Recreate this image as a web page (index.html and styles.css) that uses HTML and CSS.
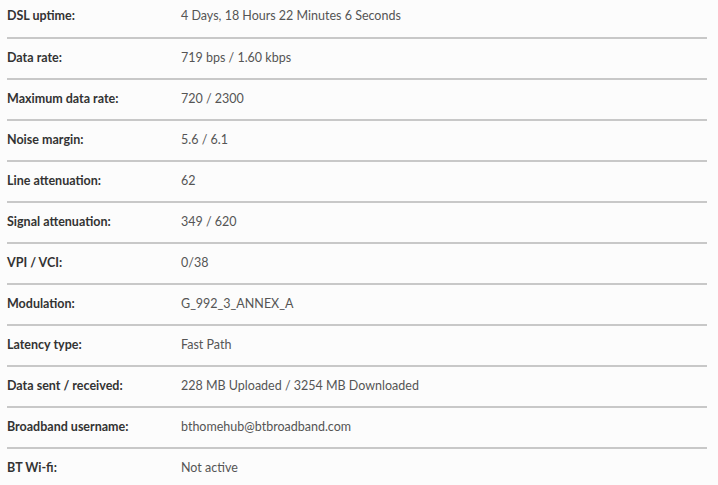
FILE: index.html
```html
<!DOCTYPE html>
<html lang="en">
<head>
    <meta charset="UTF-8">
    <meta name="viewport" content="width=device-width, initial-scale=1.0">
    <title>Broadband details</title>
    <link rel="stylesheet" href="styles.css">
</head>
<body>

<div class="details">
    <div class="row"><span class="label">DSL uptime:</span><span class="value">4 Days, 18 Hours 22 Minutes 6 Seconds</span></div>
    <div class="row"><span class="label">Data rate:</span><span class="value">719 bps / 1.60 kbps</span></div>
    <div class="row"><span class="label">Maximum data rate:</span><span class="value">720 / 2300</span></div>
    <div class="row"><span class="label">Noise margin:</span><span class="value">5.6 / 6.1</span></div>
    <div class="row"><span class="label">Line attenuation:</span><span class="value">62</span></div>
    <div class="row"><span class="label">Signal attenuation:</span><span class="value">349 / 620</span></div>
    <div class="row"><span class="label">VPI / VCI:</span><span class="value">0/38</span></div>
    <div class="row"><span class="label">Modulation:</span><span class="value">G_992_3_ANNEX_A</span></div>
    <div class="row"><span class="label">Latency type:</span><span class="value">Fast Path</span></div>
    <div class="row"><span class="label">Data sent / received:</span><span class="value">228 MB Uploaded / 3254 MB Downloaded</span></div>
    <div class="row"><span class="label">Broadband username:</span><span class="value">bthomehub@btbroadband.com</span></div>
    <div class="row"><span class="label">BT Wi-fi:</span><span class="value">Not active</span></div>
</div>

</body>
</html>
```

FILE: styles.css
```css
body {
    font-family: Lato, Arial, sans-serif;
    font-size: 12.5px;
    margin: 0;
    padding: 0;
    background-color: #fcfcfc;
}
.details {
    margin: -4px 11px 0 7px;
}
.row {
    display: grid;
    grid-template-columns: 174px 1fr;
    align-items: center;
    height: 37px;
    padding-bottom: 2px;
    border-bottom: 2px solid #c8c8c8;
}
.row:first-child {
    height: 39px;
}
.row:last-child {
    border-bottom: none;
}
.label {
    font-weight: bold;
    color: #333;
}
.value {
    color: #555;
}
```
